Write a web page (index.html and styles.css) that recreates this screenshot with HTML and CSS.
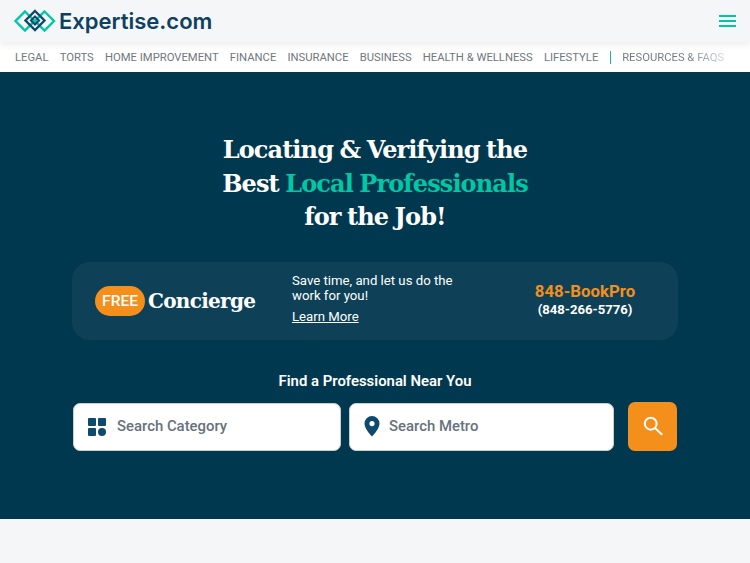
FILE: index.html
```html
<!DOCTYPE html>
<html lang="en">
<head>
  <meta charset="UTF-8" />
  <meta name="viewport" content="width=device-width, initial-scale=1.0" />
  <title>Expertise.com</title>
  <link rel="stylesheet" href="styles.css">
</head>
<body>

  <header class="topbar">
    <a class="logo" href="#">
      <svg class="logo-mark" width="45" height="24" viewBox="0 0 45 24" fill="none">
        <path d="M13 2.500 22.500 12 13 21.500 3.500 12Z" stroke="#00c7a5" stroke-width="2.400"/>
        <path d="M32.500 2.500 42 12 32.500 21.500 23 12Z" stroke="#00c7a5" stroke-width="2.400"/>
        <path d="M23 2 32.500 11.500 23 21 13.500 11.500Z" stroke="#0d4a6e" stroke-width="2.400"/>
        <path d="M23 7.500 27 11.500 23 15.500 19 11.500Z" stroke="#0d4a6e" stroke-width="2"/>
      </svg>
      <span class="logo-text">Expertise.com</span>
    </a>
    <button class="burger" aria-label="Menu"><span></span><span></span><span></span></button>
  </header>

  <nav class="catnav">
    <a href="#">LEGAL</a>
    <a href="#">TORTS</a>
    <a href="#">HOME IMPROVEMENT</a>
    <a href="#">FINANCE</a>
    <a href="#">INSURANCE</a>
    <a href="#">BUSINESS</a>
    <a href="#">HEALTH &amp; WELLNESS</a>
    <a href="#">LIFESTYLE</a>
    <span class="catnav-sep"></span>
    <a class="catnav-fade" href="#">RESOURCES &amp; FAQS</a>
  </nav>

  <main class="hero">
    <h1>Locating &amp; Verifying the<br>Best <em>Local Professionals</em><br>for the Job!</h1>

    <section class="concierge">
      <div class="concierge-name">
        <span class="free">FREE</span>
        <span class="concierge-title">Concierge</span>
      </div>
      <div class="concierge-copy">
        <p>Save time, and let us do the work for you!</p>
        <a href="#">Learn More</a>
      </div>
      <div class="concierge-phone">
        <strong>848-BookPro</strong>
        <span>(848-266-5776)</span>
      </div>
    </section>

    <h2>Find a Professional Near You</h2>

    <form class="search">
      <label class="field field-cat">
        <svg width="18" height="18" viewBox="0 0 18 18" fill="#0d4a6e">
          <rect x="0" y="0" width="8" height="8" rx="1"/>
          <rect x="10" y="0" width="8" height="8" rx="1"/>
          <rect x="0" y="10" width="8" height="8" rx="1"/>
          <circle cx="14" cy="14" r="4"/>
        </svg>
        <span>Search Category</span>
      </label>
      <label class="field field-metro">
        <svg width="16" height="21" viewBox="0 0 16 21">
          <path fill="#0d4a6e" fill-rule="evenodd" d="M8 0a7.500 7.500 0 0 1 7.500 7.500C15.500 12 11 17.500 8 20.500 5 17.500.5 12 .5 7.500A7.500 7.500 0 0 1 8 0Zm0 5a2.600 2.600 0 1 0 0 5.200A2.600 2.600 0 0 0 8 5Z"/>
        </svg>
        <span>Search Metro</span>
      </label>
      <button class="search-btn" type="button" aria-label="Search">
        <svg width="20" height="20" viewBox="0 0 22 22" fill="none" stroke="#fff" stroke-width="2.200" stroke-linecap="round">
          <circle cx="8.500" cy="8.500" r="6.500"/>
          <path d="M13.500 13.500 20.500 20"/>
        </svg>
      </button>
    </form>
  </main>

  <div class="footer-strip"></div>

</body>
</html>
```

FILE: styles.css
```css
* {
  margin: 0;
  padding: 0;
  box-sizing: border-box;
}

html, body {
  width: 100%;
  height: 100%;
  overflow: hidden;
  background-color: #f5f6f8;
  font-family: Roboto, sans-serif;
}

a {
  text-decoration: none;
}

.topbar {
  height: 42px;
  background-color: #f5f6f8;
  display: flex;
  align-items: center;
  justify-content: space-between;
  padding: 0 14px 0 12px;
  position: relative;
  z-index: 2;
  box-shadow: 0 3px 7px rgba(0,0,0,0.07);
}

.logo {
  display: flex;
  align-items: center;
  gap: 2px;
}

.logo-text {
  font-family: Inter, sans-serif;
  font-size: 22px;
  font-weight: 600;
  color: #0d4163;
}

.burger {
  width: 17px;
  display: flex;
  flex-direction: column;
  gap: 3px;
  border: none;
  background: none;
}

.burger span {
  height: 2px;
  background-color: #00c7a5;
}

.catnav {
  height: 30px;
  background-color: #fff;
  display: flex;
  align-items: center;
  gap: 11.200px;
  padding-left: 15px;
  white-space: nowrap;
  overflow: hidden;
}

.catnav a {
  font-size: 11.250px;
  color: #6f7780;
}

.catnav-sep {
  flex-shrink: 0;
  width: 1.500px;
  height: 13px;
  background-color: #1fb8a6;
}

.catnav a.catnav-fade {
  background: linear-gradient(90deg, #6f7780 62%, #d3d6da 100%);
  -webkit-background-clip: text;
  background-clip: text;
  color: transparent;
}

.hero {
  height: 447px;
  background-color: #00384f;
  display: flex;
  flex-direction: column;
  align-items: center;
  padding-top: 61px;
}

.hero h1 {
  font-family: "DejaVu Serif", serif;
  font-size: 24px;
  letter-spacing: -0.900px;
  word-spacing: -1px;
  line-height: 33.500px;
  font-weight: 700;
  color: #fff;
  text-align: center;
}

.hero h1 em {
  font-style: normal;
  color: #00c7a5;
}

.concierge {
  width: 606px;
  height: 78px;
  margin-top: 28px;
  background-color: #0e4157;
  border-radius: 18px;
  display: flex;
  align-items: center;
  padding-left: 23px;
}

.concierge-name {
  width: 197px;
  display: flex;
  align-items: center;
  gap: 3px;
}

.free {
  width: 50px;
  height: 30px;
  border-radius: 15px;
  background-color: #f48f1b;
  color: #fff;
  font-size: 15.500px;
  font-weight: 500;
  display: flex;
  align-items: center;
  justify-content: center;
}

.concierge-title {
  font-family: "DejaVu Serif", serif;
  font-size: 20px;
  letter-spacing: -0.700px;
  font-weight: 700;
  color: #fff;
}

.concierge-copy {
  width: 172px;
  padding-bottom: 4px;
  font-size: 13.200px;
  line-height: 15.500px;
  color: #fff;
}

.concierge-copy a {
  display: inline-block;
  margin-top: 5px;
  color: #fff;
  text-decoration: underline;
}

.concierge-phone {
  flex: 1;
  padding: 0 0 2px 28px;
  display: flex;
  flex-direction: column;
  align-items: center;
}

.concierge-phone strong {
  font-size: 16.800px;
  line-height: 20px;
  font-weight: 700;
  color: #f48f1b;
}

.concierge-phone span {
  font-size: 13.100px;
  line-height: 17px;
  font-weight: 700;
  color: #fff;
}

.hero h2 {
  margin-top: 32px;
  font-size: 14.900px;
  line-height: 18px;
  font-weight: 600;
  color: #fff;
}

.search {
  width: 604px;
  margin-top: 12px;
  display: flex;
  align-items: flex-end;
}

.field {
  height: 48px;
  background-color: #fff;
  border: 1px solid #c9ced3;
  border-radius: 7px;
  display: flex;
  align-items: center;
  font-size: 14.900px;
  font-weight: 500;
  color: #66727c;
}

.field span {
  position: relative;
  top: -1px;
}

.field-cat {
  width: 268px;
  padding-left: 14px;
  gap: 11px;
}

.field-metro {
  width: 265px;
  margin-left: 8px;
  padding-left: 14px;
  gap: 9px;
}

.search-btn {
  width: 49px;
  height: 49px;
  margin-left: 14px;
  border: none;
  border-radius: 7px;
  background-color: #f48f1b;
  display: flex;
  align-items: center;
  justify-content: center;
}

.footer-strip {
  height: 44px;
  background-color: #f5f6f8;
}
```
